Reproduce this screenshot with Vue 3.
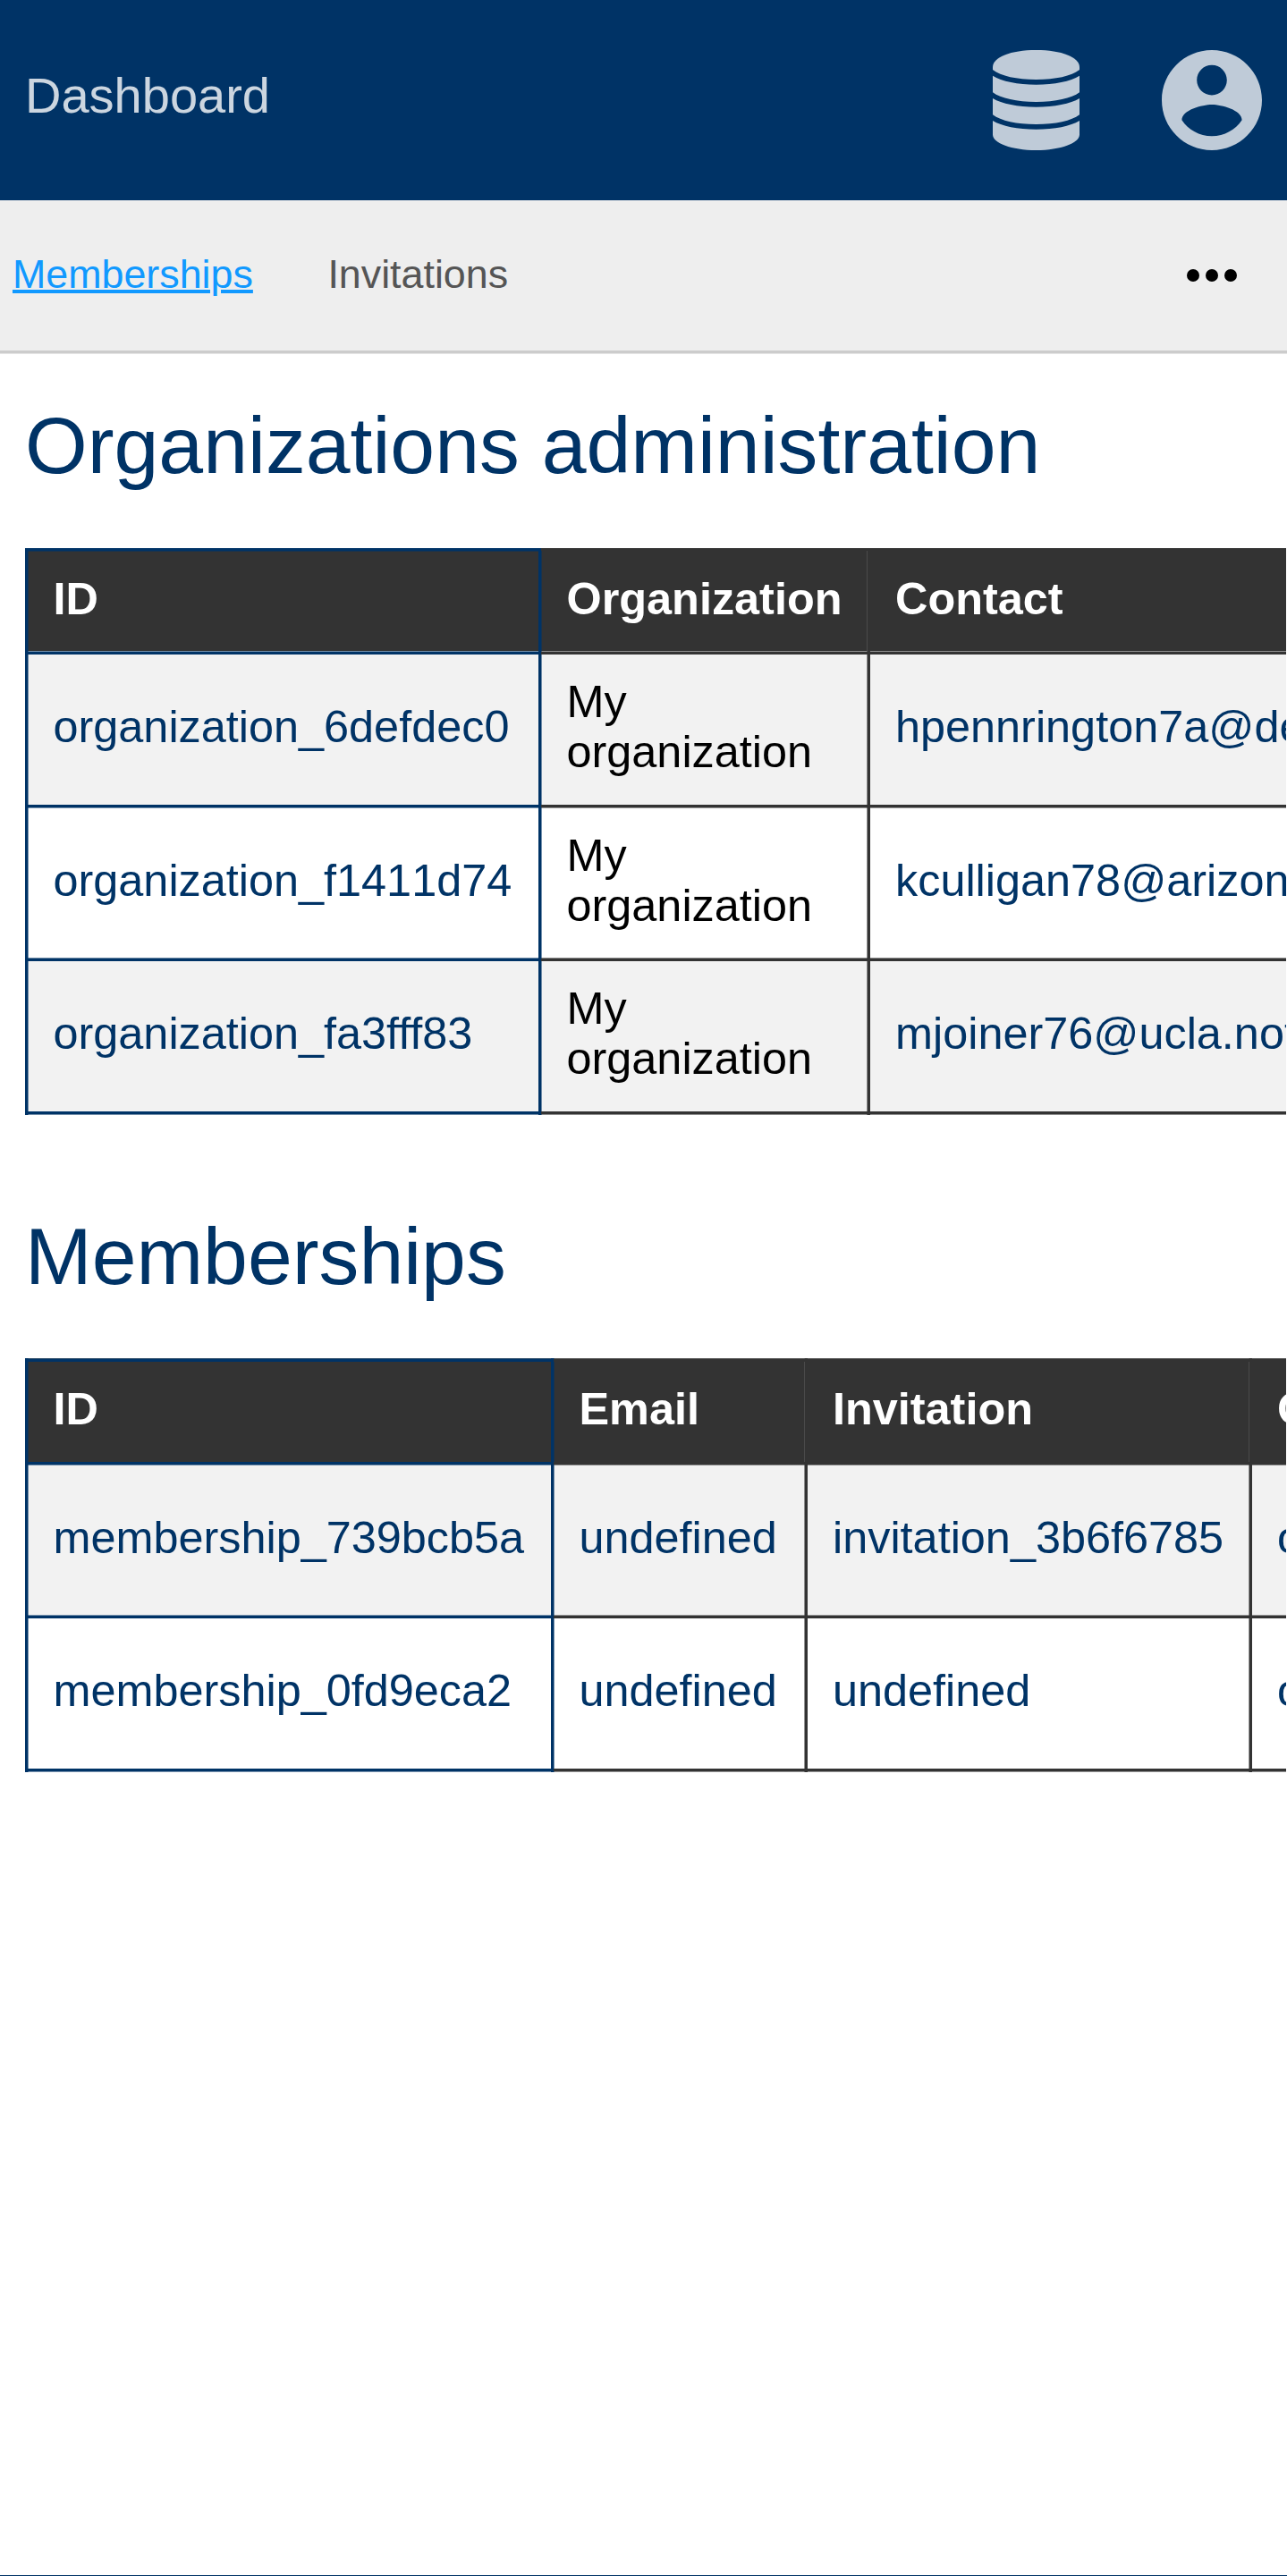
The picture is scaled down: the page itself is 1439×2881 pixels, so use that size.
<script setup>
const tabs = [
  { label: 'Memberships', active: true },
  { label: 'Invitations', active: false }
]

const sections = [
  {
    name: 'organizations',
    title: 'Organizations administration',
    head: ['ID', 'Organization', 'Contact'],
    rows: [
      ['organization_6defdec0', 'My organization', 'hpennrington7a@desdev.notcn'],
      ['organization_f1411d74', 'My organization', 'kculligan78@arizona.notedu'],
      ['organization_fa3fff83', 'My organization', 'mjoiner76@ucla.notedu']
    ],
    plain: 1
  },
  {
    name: 'memberships',
    title: 'Memberships',
    head: ['ID', 'Email', 'Invitation', 'Organization'],
    rows: [
      ['membership_739bcb5a', 'undefined', 'invitation_3b6f6785', 'organization_6defdec0'],
      ['membership_0fd9eca2', 'undefined', 'undefined', 'organization_f1411d74']
    ],
    plain: -1
  }
]
</script>

<template>
  <div class="page">
    <header class="topbar">
      <a class="brand">Dashboard</a>
      <div class="actions">
        <svg class="icon-db" viewBox="0 0 97 112">
          <path d="M0 19C0 8 20 0 48.5 0S97 8 97 19V22C88 29 70 33 48.5 33S9 29 0 22Z" />
          <path d="M0 28.7C10 35 28 38.7 48.5 38.7S87 35 97 28.7V47.3C88 54 70 58 48.5 58S9 54 0 47.3Z" />
          <path d="M0 54C10 60 28 63.7 48.5 63.7S87 60 97 54V72.2C88 79 70 83 48.5 83S9 79 0 72.2Z" />
          <path d="M0 79C10 85 28 88.8 48.5 88.8S87 85 97 79V94.5C97 104 76 112 48.5 112S0 104 0 94.5Z" />
        </svg>
        <svg class="icon-user" viewBox="2 2 20 20">
          <path d="M12 2C6.48 2 2 6.48 2 12s4.48 10 10 10 10-4.48 10-10S17.52 2 12 2zm0 3c1.66 0 3 1.34 3 3s-1.34 3-3 3-3-1.34-3-3 1.34-3 3-3zm0 14.2c-2.5 0-4.71-1.28-6-3.22.03-1.99 4-3.08 6-3.08 1.99 0 5.97 1.09 6 3.08-1.29 1.94-3.5 3.22-6 3.22z" />
        </svg>
      </div>
    </header>

    <nav class="subnav">
      <a v-for="t in tabs" :key="t.label" class="tab" :class="{ active: t.active }">{{ t.label }}</a>
      <svg class="more" viewBox="0 0 56 14">
        <circle cx="7" cy="7" r="7" />
        <circle cx="28" cy="7" r="7" />
        <circle cx="49" cy="7" r="7" />
      </svg>
    </nav>

    <main>
      <section v-for="s in sections" :key="s.name" :class="s.name">
        <h2>{{ s.title }}</h2>
        <div class="grid">
          <div v-for="(h, c) in s.head" :key="'h' + c" class="cell head" :class="'c' + c">
            <span>{{ h }}</span>
          </div>
          <template v-for="(row, r) in s.rows" :key="r">
            <div
              v-for="(v, c) in row"
              :key="c"
              class="cell"
              :class="['c' + c, 'r' + r, { odd: r % 2 === 0, last: r === s.rows.length - 1, plain: c === s.plain }]"
            >
              <span>{{ v }}</span>
            </div>
          </template>
        </div>
      </section>
    </main>
  </div>
</template>

<style>
body {
  margin: 0;
  background: #fff;
}
</style>

<style scoped>
.page {
  width: 1439px;
  height: 2881px;
  box-sizing: border-box;
  overflow: hidden;
  border-bottom: 1px solid #036;
  background: #fff;
  font-family: "Liberation Sans", Arial, sans-serif;
}

.topbar {
  display: flex;
  align-items: center;
  justify-content: space-between;
  height: 224px;
  padding: 0 28.5px 0 28px;
  box-sizing: border-box;
  background: #036;
}
.brand {
  color: rgba(255, 255, 255, 0.8);
  font-size: 56px;
  line-height: 64px;
  padding-bottom: 11px;
}
.actions {
  display: flex;
  align-items: center;
  gap: 91.5px;
  fill: rgba(255, 255, 255, 0.75);
}
.icon-db {
  width: 97px;
  height: 112px;
}
.icon-user {
  width: 112px;
  height: 112px;
}

.subnav {
  display: flex;
  align-items: center;
  gap: 83.5px;
  height: 168px;
  padding: 0 56px 0 14px;
  background: #eee;
  border-bottom: 3px solid #ccc;
  box-shadow: 0 1px 0 #e5e5e5;
}
.tab {
  color: #555;
  font-size: 44.8px;
  line-height: 52px;
  padding-bottom: 4px;
}
.tab.active {
  color: #1199ff;
  text-decoration: underline;
  text-decoration-thickness: 4px;
}
.more {
  width: 56px;
  height: 14px;
  margin-left: auto;
}

h2 {
  margin: 0;
  padding-left: 28px;
  color: #036;
  font-size: 89.6px;
  font-weight: 400;
  line-height: 104px;
}
.organizations h2 {
  padding-top: 51px;
  padding-bottom: 63px;
}
.memberships h2 {
  padding-top: 106px;
  padding-bottom: 62px;
}

.grid {
  display: grid;
  margin-left: 28px;
  margin-right: 1px;
  overflow: hidden;
}
.organizations .grid {
  grid-template-columns: 574px 367px 469px;
  grid-template-rows: 115px 172px 171px 176px;
}
.memberships .grid {
  grid-template-columns: 588px 283px 497px 42px;
  grid-template-rows: 116px 171px 176px;
}

/* Rules are three and a half pixels thick: a solid part and a half-tone edge.
   The edge falls before or after the solid part, set by the offsets below. */
.cell {
  --bg: #fff;
  --v: #333;
  --v-half: #33333388;
  --h: #333;
  --h-half: #33333388;
  --vx: 0px;
  --vhx: 3px;
  --hy: 0px;
  --hhy: 3px;
  --end: transparent;
  --end-half: transparent;
  display: flex;
  align-items: center;
  box-sizing: border-box;
  padding: 4px 24px 7px 31.5px;
  overflow: hidden;
  color: #036;
  font-size: 50.4px;
  line-height: 56px;
  background:
    linear-gradient(var(--v), var(--v)) var(--vx) 0 / 3px 100% no-repeat,
    linear-gradient(var(--h), var(--h)) 0 var(--hy) / 100% 3px no-repeat,
    linear-gradient(var(--end), var(--end)) 0 calc(100% - 1px) / 100% 3px no-repeat,
    linear-gradient(var(--v-half), var(--v-half)) var(--vhx) 0 / 1px 100% no-repeat,
    linear-gradient(var(--h-half), var(--h-half)) 0 var(--hhy) / 100% 1px no-repeat,
    linear-gradient(var(--end-half), var(--end-half)) 0 100% / 100% 1px no-repeat,
    var(--bg);
}
.odd {
  --bg: #f2f2f2;
}
.plain {
  color: #000;
}
.c0,
.c1 {
  --v: #036;
  --v-half: #00336688;
}
.c0 {
  --h: #036;
  --h-half: #00336688;
}
.c2,
.c3 {
  --vx: 1px;
  --vhx: 0px;
  padding-left: 32px;
}
.last {
  --end: #333;
  --end-half: #33333388;
  padding-bottom: 11px;
}
.last.c0 {
  --end: #036;
  --end-half: #00336688;
}
.head {
  --bg: #333;
  color: #fff;
  font-weight: 700;
}
.head.c2,
.head.c3 {
  --v-half: #4a4a4a;
}
.cell span {
  min-width: 0;
}
.c0 span,
.c2 span {
  white-space: nowrap;
}
.organizations .head,
.organizations .r1,
.memberships .r0 {
  padding-top: 6px;
}
.organizations .r1.c0 {
  font-kerning: none;
}
.organizations .r0,
.organizations .r2,
.memberships .head,
.memberships .r1 {
  --hy: 1px;
  --hhy: 0px;
}
.memberships .head {
  --h-half: #555;
}
.memberships .head.c0 {
  --h-half: #2b4a68;
}
</style>
